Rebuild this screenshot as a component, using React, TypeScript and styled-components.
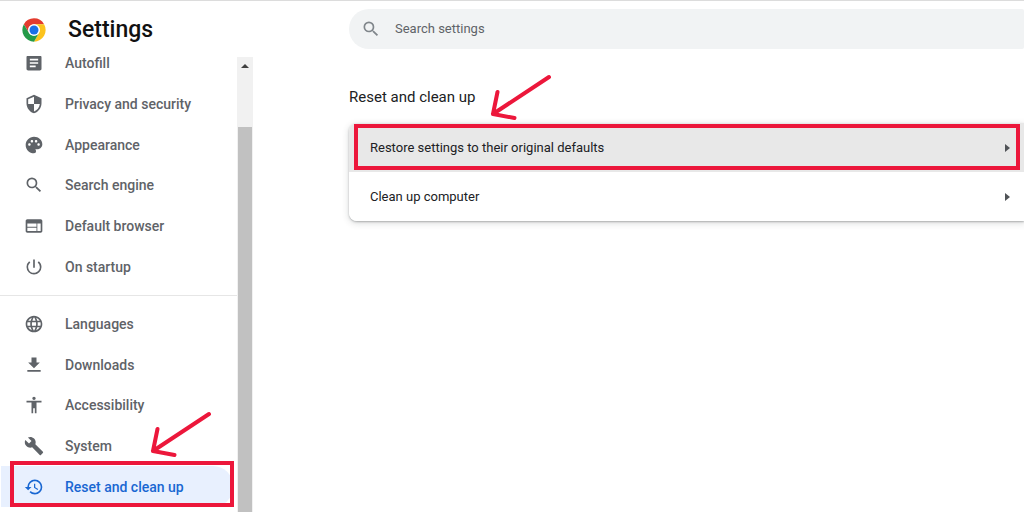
import React from "react";
import styled, { createGlobalStyle } from "styled-components";
import {
  MdAccessibility,
  MdArticle,
  MdBuild,
  MdHistory,
  MdLanguage,
  MdPalette,
  MdPowerSettingsNew,
  MdSearch,
  MdSecurity,
  MdWeb,
} from "react-icons/md";

const RED = "#ec173b";

const GlobalStyle = createGlobalStyle`
  * { box-sizing: border-box; }
  body {
    margin: 0;
    background: #fff;
    color: #202124;
    font-family: Roboto, "Liberation Sans", sans-serif;
    font-size: 13px;
    line-height: 20px;
  }
`;

const Page = styled.div`
  display: grid;
  grid-template-columns: 253px minmax(0, 1fr);
  height: 100vh;
  overflow: hidden;
  border-top: 1px solid #dcdcdc;
`;

const Sidebar = styled.aside`
  display: flex;
  flex-direction: column;
  min-height: 0;
`;

const Header = styled.header`
  display: flex;
  flex: none;
  align-items: center;
  gap: 22px;
  height: 55px;
  padding: 2px 0 0 22px;
`;

const Title = styled.h1`
  margin: 0;
  color: #111;
  font-size: 23px;
  font-weight: 500;
  line-height: 28px;
`;

const MenuViewport = styled.div`
  display: flex;
  flex: 1;
  min-height: 0;
  overflow: hidden;
`;

const Menu = styled.nav`
  flex: 1;
  margin-top: -13px;
`;

const MenuGroup = styled.div<{ $rows: number }>`
  display: grid;
  grid-auto-rows: 1fr;
  height: ${({ $rows }) => Math.round(($rows * 122) / 3)}px;
`;

const MenuDivider = styled.hr`
  height: 1px;
  margin: 8px 0;
  border: 0;
  background: #e6e6e6;
`;

const MenuLink = styled.a<{ $selected?: boolean }>`
  position: relative;
  display: flex;
  align-items: center;
  gap: 21px;
  margin: 0 4px 0 1px;
  padding-left: 23px;
  border-radius: 0 20px 20px 0;
  background: ${({ $selected }) => ($selected ? "#e8f0fe" : "transparent")};
  color: ${({ $selected }) => ($selected ? "#1967d2" : "#5f6368")};
  font-size: 14px;
  font-weight: 500;
  line-height: 14px;
  text-decoration: none;

  svg {
    flex: none;
  }
`;

const Scrollbar = styled.div`
  display: flex;
  flex: none;
  flex-direction: column;
  align-items: center;
  width: 16px;
  margin-top: 1px;
  background: #f1f1f1;
`;

const ScrollUp = styled.button`
  display: flex;
  align-items: center;
  justify-content: center;
  width: 16px;
  height: 17px;
  margin-bottom: 53px;
  padding: 0;
  border: 0;
  background: none;
`;

const ScrollThumb = styled.div`
  flex: 1;
  width: 14px;
  background: #c1c1c1;
`;

const Main = styled.main`
  padding: 8px 0 0 96px;
`;

const SearchBar = styled.label`
  display: flex;
  align-items: center;
  gap: 14px;
  height: 40px;
  padding-left: 12px;
  border-radius: 20px 2px 2px 20px;
  background: #f1f3f4;
  color: #80868b;
`;

const SearchInput = styled.input`
  flex: 1;
  min-width: 0;
  padding: 0;
  border: 0;
  outline: 0;
  background: transparent;
  color: #202124;
  font: inherit;

  &::placeholder {
    color: #5f6368;
    opacity: 1;
  }
`;

const SectionTitle = styled.h2`
  margin: 38px 0 16px;
  font-size: 15px;
  font-weight: 400;
  line-height: 20px;
`;

const Section = styled.section`
  position: relative;
`;

const Card = styled.div`
  overflow: hidden;
  border-radius: 8px 0 0 8px;
  box-shadow: 0 1px 2px rgba(60, 64, 67, 0.35), 0 2px 6px 1px rgba(60, 64, 67, 0.15);
`;

const CardRow = styled.button<{ $hovered?: boolean }>`
  display: flex;
  align-items: center;
  justify-content: space-between;
  width: 100%;
  height: 49px;
  padding: 0 14px 0 21px;
  border: 0;
  background: ${({ $hovered }) => ($hovered ? "#e8e8e8" : "#fff")};
  color: #202124;
  font: inherit;
  text-align: left;
`;

const Highlight = styled.span<{ $inset: string }>`
  position: absolute;
  inset: ${({ $inset }) => $inset};
  border: 4px solid ${RED};
  pointer-events: none;
`;

const Pointer = styled.svg<{ $left: number; $top: number }>`
  position: absolute;
  left: ${({ $left }) => $left}px;
  top: ${({ $top }) => $top}px;
  pointer-events: none;
`;

function ArrowPointer({ left, top }: { left: number; top: number }) {
  return (
    <Pointer $left={left} $top={top} width="62" height="46" viewBox="0 0 62 46" fill="none" stroke={RED} strokeWidth="4" strokeLinecap="round" strokeLinejoin="round" aria-hidden="true">
      <path d="M59 3L3 40M7.500 18L3 40L24.500 44" />
    </Pointer>
  );
}

function ChromeLogo() {
  return (
    <svg width="24" height="24" viewBox="0 0 48 48" aria-hidden="true">
      <path fill="#e33b2e" d="M3.700 12.500A23.300 23.300 0 0 1 44.200 12.400H24A11.600 11.600 0 0 0 14 29.800Z" />
      <path fill="#fcc31e" d="M44.200 12.400A23.300 23.300 0 0 1 24 47.300L34 29.800A11.600 11.600 0 0 0 24 12.400Z" />
      <path fill="#249a48" d="M3.700 12.500A23.300 23.300 0 0 0 24 47.300L34 29.800A11.600 11.600 0 0 1 14 29.800Z" />
      <circle cx="24" cy="24" r="11.600" fill="#fff" />
      <circle cx="24" cy="24" r="9" fill="#1a6fe6" />
    </svg>
  );
}

function DownloadIcon({ size }: { size: number }) {
  return (
    <svg width={size} height={size} viewBox="0 0 24 24" fill="currentColor" aria-hidden="true">
      <path d="M19 9h-4V3H9v6H5l7 7 7-7zM4 18v2h16v-2H4z" />
    </svg>
  );
}

function Caret() {
  return (
    <svg width="5" height="8" viewBox="0 0 5 8" fill="#505357" aria-hidden="true">
      <path d="M0 0L5 4L0 8Z" />
    </svg>
  );
}

const primaryItems = [
  { label: "Autofill", Icon: MdArticle },
  { label: "Privacy and security", Icon: MdSecurity },
  { label: "Appearance", Icon: MdPalette },
  { label: "Search engine", Icon: MdSearch },
  { label: "Default browser", Icon: MdWeb },
  { label: "On startup", Icon: MdPowerSettingsNew },
];

const advancedItems = [
  { label: "Languages", Icon: MdLanguage },
  { label: "Downloads", Icon: DownloadIcon },
  { label: "Accessibility", Icon: MdAccessibility },
  { label: "System", Icon: MdBuild },
  { label: "Reset and clean up", Icon: MdHistory, selected: true },
];

export default function App() {
  return (
    <>
      <GlobalStyle />
      <Page>
        <Sidebar>
          <Header>
            <ChromeLogo />
            <Title>Settings</Title>
          </Header>
          <MenuViewport>
            <Menu aria-label="Settings sections">
              <MenuGroup $rows={6}>
                {primaryItems.map(({ label, Icon }) => (
                  <MenuLink key={label} href="#">
                    <Icon size={20} />
                    {label}
                  </MenuLink>
                ))}
              </MenuGroup>
              <MenuDivider />
              <MenuGroup $rows={5}>
                {advancedItems.map(({ label, Icon, selected }) => (
                  <MenuLink key={label} href="#" $selected={selected} aria-current={selected ? "page" : undefined}>
                    <Icon size={20} />
                    {label}
                    {selected && (
                      <>
                        <Highlight $inset="-5px -1px 0 9px" />
                        <ArrowPointer left={149} top={-55} />
                      </>
                    )}
                  </MenuLink>
                ))}
              </MenuGroup>
            </Menu>
            <Scrollbar>
              <ScrollUp type="button" aria-label="Scroll up">
                <svg width="8" height="4" viewBox="0 0 8 4" fill="#404040" aria-hidden="true">
                  <path d="M0 4L4 0L8 4Z" />
                </svg>
              </ScrollUp>
              <ScrollThumb />
            </Scrollbar>
          </MenuViewport>
        </Sidebar>
        <Main>
          <SearchBar>
            <MdSearch size={20} />
            <SearchInput type="text" placeholder="Search settings" aria-label="Search settings" />
          </SearchBar>
          <SectionTitle>Reset and clean up</SectionTitle>
          <Section>
            <Card>
              <CardRow type="button" $hovered>
                Restore settings to their original defaults
                <Caret />
              </CardRow>
              <CardRow type="button">
                Clean up computer
                <Caret />
              </CardRow>
            </Card>
            <Highlight $inset="1px 4px 51px 5px" />
            <ArrowPointer left={141} top={-49} />
          </Section>
        </Main>
      </Page>
    </>
  );
}
